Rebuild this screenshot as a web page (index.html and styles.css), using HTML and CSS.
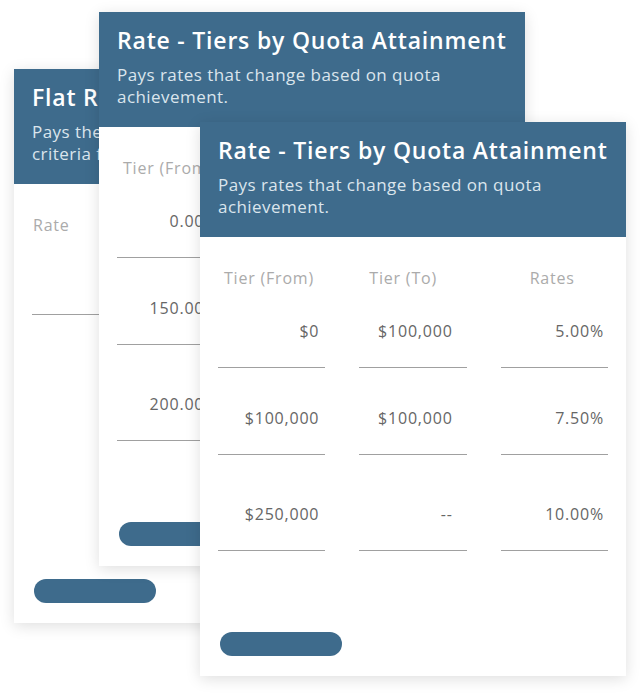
FILE: index.html
```html
<!DOCTYPE html>
<html>
  <head>
    <title>Commission Rate Plans</title>
    <link rel="stylesheet" href="styles.css">
  </head>
  <body>

    <div class="stack">

      <section class="card card-flat">
        <div class="card-head">
          <h2 class="card-title">Flat Rate</h2>
          <p class="card-desc">Pays the same rate on every deal matching<br>criteria for this plan.</p>
        </div>
        <div class="card-body">
          <div class="tier-labels single">
            <div>Rate</div>
          </div>
          <div class="tier-row single">
            <div class="tier-cell">&nbsp;</div>
          </div>
          <button class="card-btn"></button>
        </div>
      </section>

      <section class="card card-mid">
        <div class="card-head">
          <h2 class="card-title">Rate - Tiers by Quota Attainment</h2>
          <p class="card-desc">Pays rates that change based on quota achievement.</p>
        </div>
        <div class="card-body">
          <div class="tier-labels">
            <div>Tier (From)</div>
            <div>Tier (To)</div>
            <div>Rates</div>
          </div>
          <div class="tier-row">
            <div class="tier-cell">0.00%</div>
            <div class="tier-cell">150.00%</div>
            <div class="tier-cell">5.00%</div>
          </div>
          <div class="tier-row">
            <div class="tier-cell">150.00%</div>
            <div class="tier-cell">200.00%</div>
            <div class="tier-cell">7.50%</div>
          </div>
          <div class="tier-row">
            <div class="tier-cell">200.00%</div>
            <div class="tier-cell">--</div>
            <div class="tier-cell">10.00%</div>
          </div>
          <button class="card-btn"></button>
        </div>
      </section>

      <section class="card card-front">
        <div class="card-head">
          <h2 class="card-title">Rate - Tiers by Quota Attainment</h2>
          <p class="card-desc">Pays rates that change based on quota achievement.</p>
        </div>
        <div class="card-body">
          <div class="tier-labels">
            <div>Tier (From)</div>
            <div>Tier (To)</div>
            <div>Rates</div>
          </div>
          <div class="tier-row">
            <div class="tier-cell">$0</div>
            <div class="tier-cell">$100,000</div>
            <div class="tier-cell">5.00%</div>
          </div>
          <div class="tier-row">
            <div class="tier-cell">$100,000</div>
            <div class="tier-cell">$100,000</div>
            <div class="tier-cell">7.50%</div>
          </div>
          <div class="tier-row">
            <div class="tier-cell">$250,000</div>
            <div class="tier-cell">--</div>
            <div class="tier-cell">10.00%</div>
          </div>
          <button class="card-btn"></button>
        </div>
      </section>

    </div>

  </body>
</html>
```

FILE: styles.css
```css
body {
    margin: 0;
    padding: 0;
    background-color: #ffffff;
    font-family: "Open Sans", "Lato", sans-serif;
}

/* the cards overlap each other like papers on a desk */
.stack {
    position: relative;
    width: 640px;
    height: 693px;
}

.card {
    position: absolute;
    width: 426px;
    height: 554px;
    display: flex;
    flex-direction: column;
    background-color: #ffffff;
    box-shadow: 0 3px 14px rgba(0, 0, 0, 0.13);
}

.card-flat {
    left: 14px;
    top: 69px;
}

.card-mid {
    left: 99px;
    top: 12px;
}

.card-front {
    left: 200px;
    top: 122px;
}

.card-head {
    background-color: #3e6b8c;
    color: #ffffff;
    padding: 14px 18px 18px;
    height: 83px;
}

.card-title {
    margin: 0;
    font-size: 23px;
    line-height: 28px;
    font-weight: 600;
    letter-spacing: 0.8px;
    white-space: nowrap;
}

.card-desc {
    margin: 10px 0 0;
    font-size: 17px;
    line-height: 22px;
    letter-spacing: 0.45px;
    color: #dbe5ec;
}

.card-body {
    flex: 1;
    display: flex;
    flex-direction: column;
    padding: 30px 18px 20px;
    font-size: 16px;
    line-height: 22px;
    letter-spacing: 0.8px;
}

.tier-labels,
.tier-row {
    display: grid;
    grid-template-columns: repeat(3, 1fr);
    column-gap: 34px;
}

.tier-labels {
    color: #ababab;
}

.tier-labels > :nth-child(1) {
    padding-left: 6px;
}

.tier-labels > :nth-child(2) {
    padding-left: 10px;
}

.tier-labels > :nth-child(3) {
    padding-left: 29px;
}

.tier-labels.single > :nth-child(1) {
    padding-left: 1px;
}

.tier-row {
    padding-top: 39px;
}

.tier-row:nth-child(2) {
    padding-top: 31px;
}

.tier-row:nth-child(4) {
    padding-top: 48px;
}

.tier-cell {
    color: #666666;
    text-align: right;
    padding-bottom: 25px;
    border-bottom: 1px solid #a0a0a0;
}

.tier-cell:nth-child(1) {
    padding-right: 6px;
}

.tier-cell:nth-child(2) {
    padding-right: 14px;
}

.tier-cell:nth-child(3) {
    padding-right: 4px;
}

.card-btn {
    margin-top: auto;
    margin-left: 2px;
    width: 122px;
    height: 24px;
    border: none;
    border-radius: 12px;
    background-color: #3e6b8c;
}
```
